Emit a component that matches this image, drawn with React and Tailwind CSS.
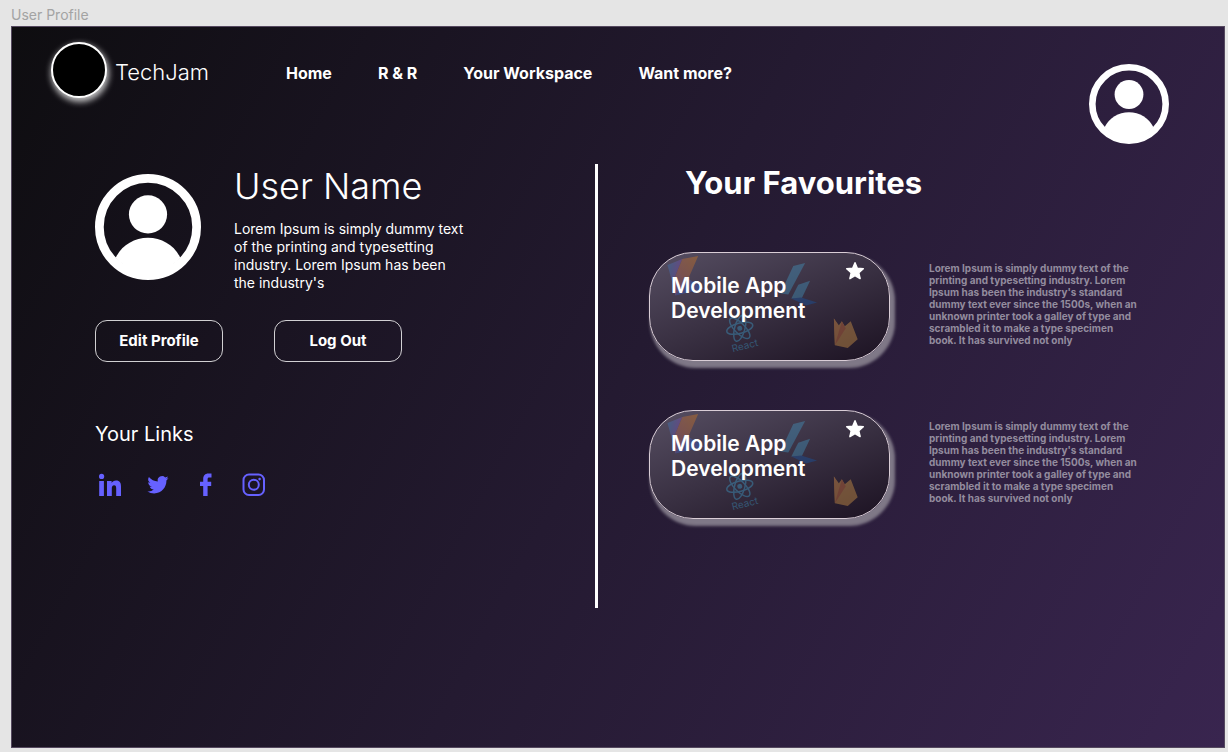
import React from "react";

const NAV = ["Home", "R & R", "Your Workspace", "Want more?"];

const BLURB =
  "Lorem Ipsum is simply dummy text of the printing and typesetting industry. Lorem Ipsum has been the industry's standard dummy text ever since the 1500s, when an unknown printer took a galley of type and scrambled it to make a type specimen book. It has survived not only";

const FAVOURITES = [
  { id: 1, title: "Mobile App Development", text: BLURB },
  { id: 2, title: "Mobile App Development", text: BLURB },
];

function Avatar({ className }) {
  return (
    <svg viewBox="0 0 80 80" className={className} aria-hidden="true">
      <circle cx="40" cy="40" r="36.7" fill="none" stroke="#fff" strokeWidth="6.6" />
      <circle cx="40" cy="30.5" r="14.4" fill="#fff" />
      <path d="M15.6 63.2C20 54 29.5 48.2 40 48.2S60 54 64.4 63.2C58 70 50 74.5 40 74.5S22 70 15.6 63.2Z" fill="#fff" />
    </svg>
  );
}

function LinkedIn() {
  return (
    <svg viewBox="0 0 24 24" className="size-6" fill="currentColor" aria-hidden="true">
      <circle cx="3.6" cy="3.4" r="2.6" />
      <path d="M1.2 7.9H5.9V23H1.2ZM9 7.9h4.6v2c.8-1.4 2.4-2.4 4.5-2.4 3.8 0 4.9 2.4 4.9 6V23h-4.8v-7.4c0-2.2-.5-3.400-2.100-3.400-1.700 0-2.300 1.300-2.300 3.200V23H9Z" />
    </svg>
  );
}

function Twitter() {
  return (
    <svg viewBox="0 0 24 24" className="size-6" fill="currentColor" aria-hidden="true">
      <path d="M22.5 5.1a8.7 8.7 0 0 1-2.5.7 4.3 4.3 0 0 0 1.9-2.4 8.7 8.7 0 0 1-2.7 1 4.35 4.35 0 0 0-7.4 4A12.3 12.3 0 0 1 2.9 3.9a4.350 4.350 0 0 0 1.300 5.800 4.300 4.300 0 0 1-2-.5v.1a4.350 4.350 0 0 0 3.500 4.200 4.300 4.300 0 0 1-2 .1 4.350 4.350 0 0 0 4.100 3A8.700 8.700 0 0 1 1.400 18.400a12.300 12.300 0 0 0 6.700 2c8 0 12.300-6.600 12.300-12.300v-.6a8.800 8.800 0 0 0 2.100-2.400Z" />
    </svg>
  );
}

function Facebook() {
  return (
    <svg viewBox="0 0 24 24" className="size-6" fill="currentColor" aria-hidden="true">
      <path d="M9.200 23V13H6V8.700h3.200V6c0-3.300 1.900-5.500 5.100-5.500h3.200v4h-2.200c-1.300 0-1.700.6-1.700 1.700v2.500h3.600V13h-3.600v10Z" />
    </svg>
  );
}

function Instagram() {
  return (
    <svg viewBox="0 0 24 24" className="size-6" fill="none" stroke="currentColor" strokeWidth="2" aria-hidden="true">
      <rect x="1.500" y="1.500" width="20.500" height="20.500" rx="5.500" />
      <circle cx="11.800" cy="11.800" r="5" />
      <circle cx="17.600" cy="6.100" r="1.300" fill="currentColor" stroke="none" />
    </svg>
  );
}

const LINKS = [
  { name: "LinkedIn", Icon: LinkedIn },
  { name: "Twitter", Icon: Twitter },
  { name: "Facebook", Icon: Facebook },
  { name: "Instagram", Icon: Instagram },
];

function CardArt() {
  return (
    <svg viewBox="0 0 240 108" className="absolute inset-0 size-full" aria-hidden="true">
      <defs>
        <linearGradient id="kotlinBand" x1="1" y1="0" x2="0" y2="1">
          <stop offset="0" stopColor="#f88909" />
          <stop offset="0.55" stopColor="#d8703f" />
          <stop offset="1" stopColor="#7a5ad8" />
        </linearGradient>
        <linearGradient id="kotlinTop" x1="0" y1="0" x2="1" y2="0.3">
          <stop offset="0" stopColor="#2a8fd0" />
          <stop offset="1" stopColor="#9a4bd0" />
        </linearGradient>
      </defs>
      <g opacity="0.32">
        <path d="M17 12 32 6 22 30Z" fill="url(#kotlinTop)" />
        <path d="M32 6 48 3 38 26 25 43 22 30Z" fill="url(#kotlinBand)" />
        <path d="M38 26 54 36 25 43Z" fill="#3a68e0" />
      </g>
      <g opacity="0.32">
        <path d="M156 10 144 13 131 41 139 42Z" fill="#45b0e0" />
        <path d="M161 28 149 32 142 46 152 47Z" fill="#45b0e0" />
        <path d="M142 46 152 45 168 50 157 53Z" fill="#0f62c0" />
      </g>
      <g opacity="0.38" stroke="#3fa9d8" fill="none" strokeWidth="1.5" transform="rotate(-15 90 76)">
        <ellipse cx="90" cy="76" rx="13.5" ry="5.2" />
        <ellipse cx="90" cy="76" rx="13.5" ry="5.2" transform="rotate(60 90 76)" />
        <ellipse cx="90" cy="76" rx="13.5" ry="5.2" transform="rotate(120 90 76)" />
        <circle cx="90" cy="76" r="2.5" fill="#3fa9d8" stroke="none" />
      </g>
      <text x="95" y="97" textAnchor="middle" transform="rotate(-14 95 93)" fill="#3fa9d8" opacity="0.36" fontSize="10" fontFamily="Inter, sans-serif">
        React
      </text>
      <g opacity="0.4">
        <path d="M185 66 190 73 193 69 196 74 202 69 209 87 199 96 186 93Z" fill="#e0a04a" />
        <path d="M185 66 191 76 186 93Z" fill="#e89a4a" />
        <path d="M193 69 197 76 186 93Z" fill="#d8743f" />
      </g>
    </svg>
  );
}

function FavouriteCard({ title, text }) {
  return (
    <li className="flex items-start gap-[39px]">
      <article className="relative h-[109px] w-[241px] shrink-0 rounded-[44px] border border-[#d9cdd6] bg-linear-[160deg] from-[#564e62] to-[#1c1222] shadow-[3px_5px_3px_2px_#7f7887]">
        <CardArt />
        <h3 className="relative w-[170px] pt-5 pl-[21px] text-[21px] leading-[25px] font-semibold">{title}</h3>
        <button type="button" aria-label="Remove from favourites" className="absolute top-2 right-6 size-5">
          <svg viewBox="0 0 20 20" className="size-5" fill="#fff" stroke="#fff" strokeWidth="1.5" strokeLinejoin="round" aria-hidden="true">
            <path d="M10 1.8 12.3 7.2 18.3 7.8 13.8 11.8 15.1 17.6 10 14.6 4.9 17.6 6.2 11.8 1.7 7.8 7.7 7.2Z" />
          </svg>
        </button>
      </article>
      <p className="mt-[10px] w-[212px] text-[10px] leading-[12px] font-bold text-[#938c9e]">{text}</p>
    </li>
  );
}

export default function App() {
  return (
    <div className="flex min-h-screen flex-col bg-[#e5e5e5] pr-[3px] pb-1 pl-[11px] font-['Inter',sans-serif]">
      <p className="pt-1 pb-px text-[14px] leading-[21px] text-[#a3a3a3]">User Profile</p>

      <div className="flex grow flex-col border border-[#55495f] bg-linear-[118deg] from-[#0e0d10] via-[#241a31] to-[#39254f] text-white">
        <header className="flex items-start pt-[15px] pr-[55px] pl-[39px]">
          <a href="#" className="flex w-[235px] items-center gap-2">
            <span className="size-14 rounded-full border-2 border-white bg-black shadow-[1px_3px_6px_1px_rgba(255,255,255,0.75)]" />
            <span className="pt-1 text-[22px] font-light">TechJam</span>
          </a>
          <nav className="flex h-[62px] items-center gap-[46px] text-[16px] font-bold">
            {NAV.map((label) => (
              <a key={label} href="#">
                {label}
              </a>
            ))}
          </nav>
          <a href="#" aria-label="Account" className="mt-[22px] ml-auto">
            <Avatar className="size-20" />
          </a>
        </header>

        <main className="mt-5 flex grow">
          <section className="w-[583px] pl-[83px]">
            <div className="flex gap-[33px] pt-[10px]">
              <Avatar className="size-[106px] shrink-0" />
              <div>
                <h1 className="-mt-[10px] text-[36px] leading-[44px] font-light">User Name</h1>
                <p className="mt-3 w-[234px] text-[14px] leading-[18px]">
                  Lorem Ipsum is simply dummy text of the printing and typesetting industry. Lorem Ipsum has been the
                  industry's
                </p>
              </div>
            </div>
            <div className="mt-7 flex gap-[51px] text-[15px] font-bold">
              <button type="button" className="h-[42px] w-32 rounded-xl border border-white/80">
                Edit Profile
              </button>
              <button type="button" className="h-[42px] w-32 rounded-xl border border-white/80">
                Log Out
              </button>
            </div>
            <h2 className="mt-[58px] text-[20px] leading-[28px]">Your Links</h2>
            <ul className="mt-[25px] flex gap-6 pl-[3px] text-[#6661ff]">
              {LINKS.map(({ name, Icon }) => (
                <li key={name}>
                  <a href="#" aria-label={name} className="block">
                    <Icon />
                  </a>
                </li>
              ))}
            </ul>
          </section>

          <div className="h-[444px] w-[3px] bg-white" />

          <section className="grow pl-[51px]">
            <h2 className="pl-9 text-[31px] leading-[38px] font-bold">Your Favourites</h2>
            <ul className="mt-[50px] flex flex-col gap-[49px]">
              {FAVOURITES.map((item) => (
                <FavouriteCard key={item.id} title={item.title} text={item.text} />
              ))}
            </ul>
          </section>
        </main>
      </div>
    </div>
  );
}
